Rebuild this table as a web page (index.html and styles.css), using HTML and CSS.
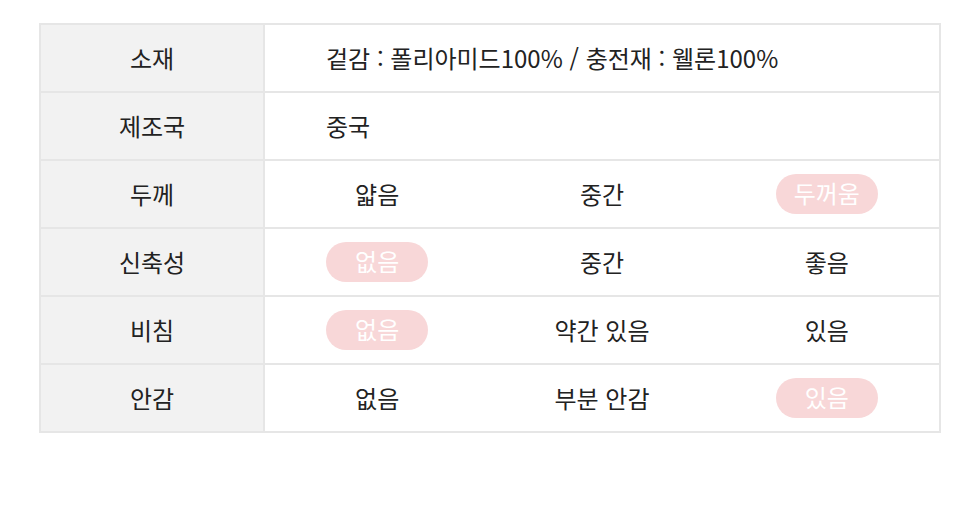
FILE: index.html
```html
<!DOCTYPE html>
<html lang="ko">
<head>
<meta charset="utf-8">
<link rel="stylesheet" href="styles.css">
</head>
<body>
<table class="spec">
  <colgroup>
    <col class="c-label">
    <col class="c-val">
    <col class="c-val">
    <col class="c-val">
  </colgroup>
  <tr>
    <th>소재</th>
    <td colspan="3" class="wide">겉감 : 폴리아미드100% / 충전재 : 웰론100%</td>
  </tr>
  <tr>
    <th>제조국</th>
    <td colspan="3" class="wide">중국</td>
  </tr>
  <tr>
    <th>두께</th>
    <td>얇음</td>
    <td>중간</td>
    <td><span class="pill">두꺼움</span></td>
  </tr>
  <tr>
    <th>신축성</th>
    <td><span class="pill">없음</span></td>
    <td>중간</td>
    <td>좋음</td>
  </tr>
  <tr>
    <th>비침</th>
    <td><span class="pill">없음</span></td>
    <td>약간 있음</td>
    <td>있음</td>
  </tr>
  <tr>
    <th>안감</th>
    <td>없음</td>
    <td>부분 안감</td>
    <td><span class="pill">있음</span></td>
  </tr>
</table>
</body>
</html>
```

FILE: styles.css
```css
html, body {
  margin: 0;
  padding: 0;
  background: #fff;
}
body {
  padding: 23px 39px 0 39px;
  font-family: "Noto Sans CJK KR", "Noto Sans", sans-serif;
  color: #222;
}
.spec {
  border-collapse: collapse;
  width: 902px;
  table-layout: fixed;
  border: 2px solid #e6e6e6;
}
.c-label { width: 224px; }
.spec th, .spec td {
  border-top: 2px solid #e6e6e6;
  border-bottom: 2px solid #e6e6e6;
  height: 64px;
  padding: 0 0 2px 0;
  font-size: 24px;
  font-weight: 400;
  text-align: center;
  vertical-align: middle;
}
.spec th {
  background: #f2f2f2;
  border-right: 2px solid #e6e6e6;
}
.spec td.wide {
  text-align: left;
  padding-left: 61px;
}
.pill {
  display: inline-block;
  width: 102px;
  height: 40px;
  line-height: 38px;
  border-radius: 20px;
  background: #f8d7d8;
  color: #fff;
  vertical-align: middle;
}
```
